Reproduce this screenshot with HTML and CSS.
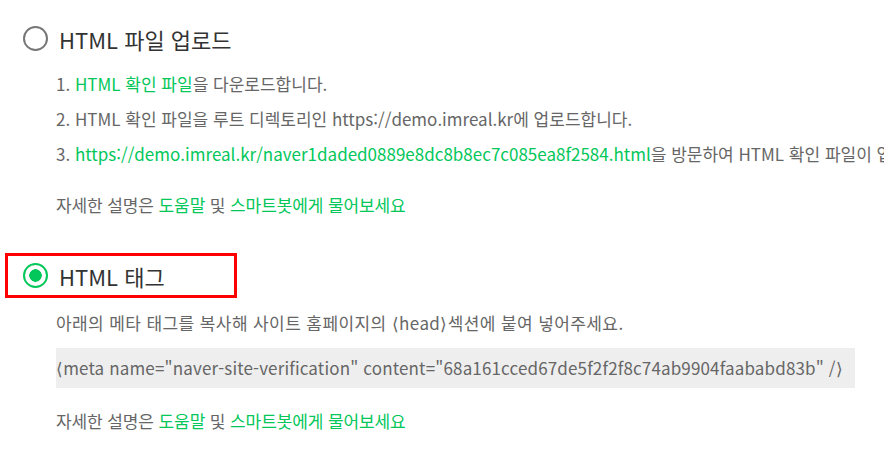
FILE: index.html
```html
<!DOCTYPE html>
<html lang="ko">
<head>
    <meta charset="UTF-8">
    <meta name="viewport" content="width=device-width, initial-scale=1.0">
    <title>사이트 소유확인</title>
    <link rel="stylesheet" href="styles.css">
</head>
<body>
    <div class="option">
        <label class="option-head">
            <span class="radio"></span>
            <span class="option-title">HTML 파일 업로드</span>
        </label>
        <ol class="steps">
            <li>1. <a href="#">HTML 확인 파일</a>을 다운로드합니다.</li>
            <li>2. HTML 확인 파일을 루트 디렉토리인 https://demo.imreal.kr에 업로드합니다.</li>
            <li>3. <a href="#">https://demo.imreal.kr/naver1daded0889e8dc8b8ec7c085ea8f2584.html</a>을 방문하여 HTML 확인 파일이 업로드되었는지 확인합니다.</li>
        </ol>
        <p class="help">자세한 설명은 <a href="#">도움말</a> 및 <a href="#">스마트봇에게 물어보세요</a></p>
    </div>

    <div class="option">
        <label class="option-head selected">
            <span class="radio checked"></span>
            <span class="option-title">HTML 태그</span>
        </label>
        <p class="desc">아래의 메타 태그를 복사해 사이트 홈페이지의 &lang;head&rang;섹션에 붙여 넣어주세요.</p>
        <div class="code">&lang;meta name="naver-site-verification" content="68a161cced67de5f2f2f8c74ab9904faababd83b" /&rang;</div>
        <p class="help">자세한 설명은 <a href="#">도움말</a> 및 <a href="#">스마트봇에게 물어보세요</a></p>
    </div>
</body>
</html>
```

FILE: styles.css
```css
html, body {
    margin: 0;
    overflow: hidden;
    background: white;
    font-family: "Noto Sans CJK KR", "Noto Sans", sans-serif;
    color: #666;
}
body {
    padding-top: 16px;
}
a {
    color: #03c75a;
    text-decoration: none;
}
.option-head {
    display: flex;
    align-items: center;
    gap: 11px;
    box-sizing: border-box;
    width: 232px;
    height: 45px;
    margin-left: 5px;
    padding-left: 15px;
    border: 3px solid transparent;
}
.option-head.selected {
    border-color: #f00;
}
.radio {
    box-sizing: border-box;
    flex: none;
    width: 25px;
    height: 25px;
    border: 2px solid #777;
    border-radius: 50%;
}
.radio.checked {
    border-color: #03c75a;
    background: radial-gradient(circle, #03c75a 6px, white 6.5px);
}
.option-title {
    font-size: 22px;
    color: #333;
    white-space: nowrap;
}
.steps, .help, .desc {
    margin: 0;
    padding: 0;
    padding-left: 56px;
    list-style: none;
    font-size: 17px;
    line-height: 35px;
    white-space: nowrap;
}
.steps {
    margin-top: 5px;
}
.help {
    margin-top: 16px;
    letter-spacing: -0.1px;
}
.option + .option {
    margin-top: 31px;
}
.desc {
    margin-top: 7px;
    letter-spacing: 0.4px;
}
.code {
    margin: 8px 0 0 56px;
    width: 799px;
    height: 40px;
    line-height: 40px;
    background: #eee;
    font-size: 17px;
    letter-spacing: 0.15px;
    white-space: nowrap;
}
.option:last-child .help {
    margin-top: 15px;
}
```
